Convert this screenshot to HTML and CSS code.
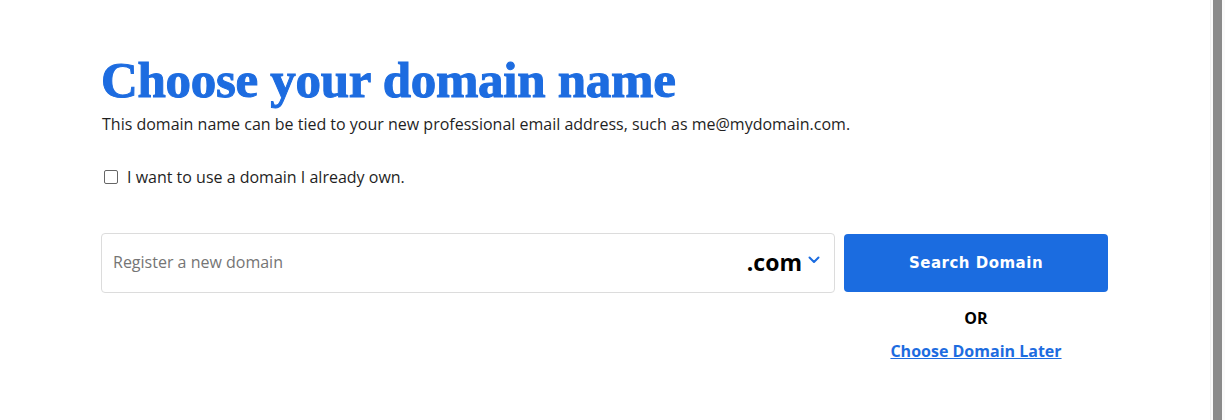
FILE: index.html
```html
<!DOCTYPE html>
<html lang="en">
<head>
<meta charset="utf-8">
<title>Choose your domain name</title>
<link rel="stylesheet" href="styles.css">
</head>
<body>
<div class="page">
  <main class="content">
    <h1 class="title">Choose your domain name</h1>
    <p class="subtitle">This domain name can be tied to your new professional email address, such as me@mydomain.com.</p>
    <label class="own">
      <span class="box"></span>
      <span class="own-text">I want to use a domain I already own.</span>
    </label>
    <div class="search-row">
      <div class="field">
        <span class="placeholder">Register a new domain</span>
        <span class="tld">.com
          <svg class="chev" width="12" height="8" viewBox="0 0 12 8"><path d="M1.5 1.5 L6 6 L10.5 1.5" fill="none" stroke="#1b6ce0" stroke-width="2" stroke-linecap="round" stroke-linejoin="round"/></svg>
        </span>
      </div>
      <div class="actions">
        <button class="search-btn">Search Domain</button>
        <div class="or">OR</div>
        <a class="later" href="#">Choose Domain Later</a>
      </div>
    </div>
  </main>
  <div class="scrollbar"><div class="thumb"></div></div>
</div>
</body>
</html>
```

FILE: styles.css
```css
html, body {
  margin: 0;
  padding: 0;
  background: #fff;
  height: 100%;
}
.page {
  display: flex;
  height: 420px;
  font-family: "Open Sans", "Liberation Sans", sans-serif;
  color: #1f1f1f;
}
.content {
  flex: 1;
  padding: 51px 0 0 101px;
}
.title {
  margin: 0;
  font-family: "Liberation Serif", "DejaVu Serif", serif;
  font-weight: 700;
  font-size: 51px;
  line-height: 58px;
  color: #1d6ce0;
  letter-spacing: -0.3px;
  -webkit-text-stroke: 1px #1d6ce0;
}
.subtitle {
  margin: 5px 0 0 1px;
  font-size: 16px;
  line-height: 20px;
}
.own {
  display: flex;
  align-items: center;
  gap: 9px;
  margin: 33px 0 0 3px;
  font-size: 16px;
  line-height: 20px;
}
.box {
  width: 12px;
  height: 12px;
  border: 1.6px solid #666;
  border-radius: 2px;
}
.search-row {
  display: flex;
  gap: 9px;
  margin-top: 46px;
}
.field {
  width: 734px;
  height: 60px;
  box-sizing: border-box;
  border: 1px solid #dcdcdc;
  border-radius: 4px;
  display: flex;
  align-items: center;
  justify-content: space-between;
  padding: 0 14px 0 11px;
}
.placeholder {
  color: #757575;
  font-size: 16px;
  margin-top: -3px;
}
.tld {
  display: flex;
  align-items: center;
  gap: 6px;
  font-size: 23px;
  font-weight: 700;
  color: #000;
  margin-top: -2px;
}
.chev {
  margin-top: -4px;
}
.actions {
  width: 264px;
  display: flex;
  flex-direction: column;
  align-items: center;
  margin-top: 1px;
}
.search-btn {
  width: 100%;
  height: 58px;
  border: 0;
  border-radius: 4px;
  background: #1b6ce0;
  color: #fff;
  font-family: "DejaVu Sans", "Liberation Sans", sans-serif;
  font-weight: 700;
  font-size: 15px;
  letter-spacing: 0.5px;
  padding-bottom: 2px;
}
.or {
  margin-top: 15px;
  font-weight: 700;
  font-size: 16px;
  color: #000;
}
.later {
  margin-top: 11px;
  font-weight: 700;
  font-size: 16px;
  color: #1d6ce0;
  text-decoration: underline;
}
.scrollbar {
  width: 14px;
  background: #fafafa;
  border-left: 1px solid #f0f0f0;
  display: flex;
  justify-content: center;
}
.thumb {
  width: 9px;
  margin-left: -2px;
  background: #8a8a8a;
}
```
